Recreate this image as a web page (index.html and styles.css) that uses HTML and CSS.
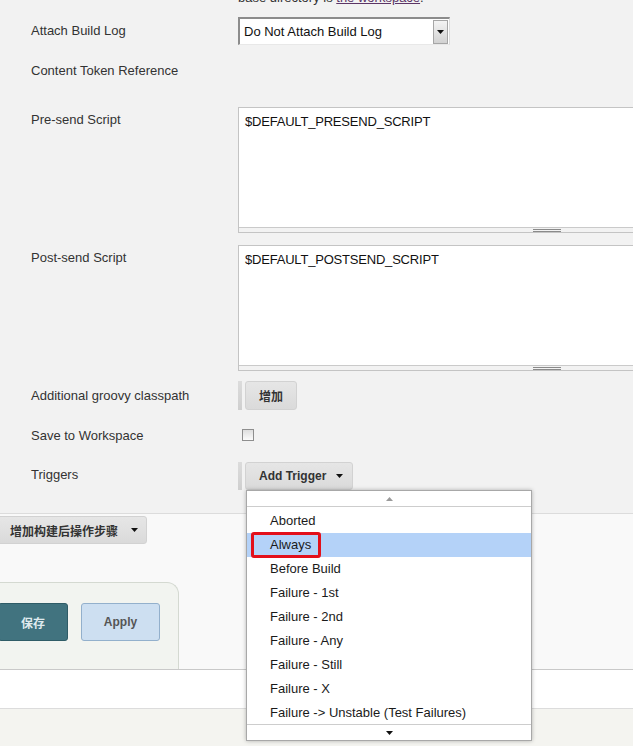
FILE: index.html
```html
<!DOCTYPE html>
<html lang="zh">
<head>
<meta charset="utf-8">
<title>Editable Email Notification</title>
<link rel="stylesheet" href="styles.css">
</head>
<body>
<div class="page">
  <div class="config">
    <div class="row row-help">
      <div class="label"></div>
      <div class="field help">base directory is <a href="#" class="visited">the workspace</a>.</div>
    </div>

    <div class="row row-attach">
      <div class="label">Attach Build Log</div>
      <div class="field">
        <div class="select">
          <span class="select-text">Do Not Attach Build Log</span>
          <span class="select-btn"><svg width="7" height="4" viewBox="0 0 7 4"><polygon points="0,0 7,0 3.5,4" fill="#111"/></svg></span>
        </div>
      </div>
    </div>

    <div class="row row-token">
      <div class="label">Content Token Reference</div>
    </div>

    <div class="row row-script row-pre">
      <div class="label">Pre-send Script</div>
      <div class="field">
        <div class="textarea">
          <div class="textarea-body">$DEFAULT_PRESEND_SCRIPT</div>
          <div class="textarea-handle"><span class="grip"></span></div>
        </div>
      </div>
    </div>

    <div class="row row-script row-post">
      <div class="label">Post-send Script</div>
      <div class="field">
        <div class="textarea">
          <div class="textarea-body">$DEFAULT_POSTSEND_SCRIPT</div>
          <div class="textarea-handle"><span class="grip"></span></div>
        </div>
      </div>
    </div>

    <div class="row row-groovy">
      <div class="label">Additional groovy classpath</div>
      <div class="field">
        <div class="btn-group">
          <button class="btn btn-add" type="button">增加</button>
        </div>
      </div>
    </div>

    <div class="row row-save">
      <div class="label">Save to Workspace</div>
      <div class="field">
        <input class="checkbox" type="checkbox">
      </div>
    </div>

    <div class="row row-triggers">
      <div class="label">Triggers</div>
      <div class="field">
        <div class="btn-group trigger-group">
          <button class="btn btn-trigger" type="button">Add Trigger<svg class="caret" width="7" height="4" viewBox="0 0 7 4"><polygon points="0,0 7,0 3.5,4" fill="#111"/></svg></button>
          <div class="menu">
            <div class="menu-scroll menu-scroll-top"><svg width="7" height="4" viewBox="0 0 7 4"><polygon points="0,4 7,4 3.5,0" fill="#9a9a9a"/></svg></div>
            <ul class="menu-list">
              <li class="menu-item">Aborted</li>
              <li class="menu-item is-active"><span class="annot">Always</span></li>
              <li class="menu-item">Before Build</li>
              <li class="menu-item">Failure - 1st</li>
              <li class="menu-item">Failure - 2nd</li>
              <li class="menu-item">Failure - Any</li>
              <li class="menu-item">Failure - Still</li>
              <li class="menu-item">Failure - X</li>
              <li class="menu-item">Failure -&gt; Unstable (Test Failures)</li>
            </ul>
            <div class="menu-scroll menu-scroll-bottom"><svg width="7" height="4" viewBox="0 0 7 4"><polygon points="0,0 7,0 3.5,4" fill="#111"/></svg></div>
          </div>
        </div>
      </div>
    </div>
  </div>

  <div class="post">
    <button class="btn btn-post" type="button">增加构建后操作步骤<svg class="caret" width="7" height="4" viewBox="0 0 7 4"><polygon points="0,0 7,0 3.5,4" fill="#111"/></svg></button>
    <div class="actions">
      <button class="btn-save" type="button">保存</button>
      <button class="btn-apply" type="button">Apply</button>
    </div>
  </div>

  <div class="footer-band"></div>
  <div class="footer"></div>
</div>
</body>
</html>
```

FILE: styles.css
```css
html, body {
  margin: 0;
  padding: 0;
}

body {
  width: 633px;
  height: 746px;
  overflow: hidden;
  background: #f4f4f0;
  font-family: "Liberation Sans", Arial, "Noto Sans CJK SC", sans-serif;
  font-size: 13px;
  color: #333;
}

.page {
  width: 633px;
  overflow: hidden;
}

/* ---------- config area ---------- */
.config {
  background: #f2f2f2;
  padding: 0 0 23px 31px;
}

.row {
  display: flex;
  align-items: center;
}

.label {
  width: 207px;
  flex: none;
  line-height: 16px;
}

.field {
  flex: none;
}

.row-help {
  margin-top: -10px;
  height: 16px;
  line-height: 16px;
}

.help a.visited {
  color: #5c3566;
  text-decoration: underline;
}

.row-attach {
  margin-top: 11px;
}

.row-token {
  margin-top: 18px;
}

.row-script {
  align-items: flex-start;
}

.row-script .label {
  padding-top: 5px;
}

.row-pre {
  margin-top: 28px;
}

.row-post {
  margin-top: 12px;
}

.row-groovy {
  margin-top: 10px;
}

.row-save {
  margin-top: 18px;
  height: 16px;
}

.row-triggers {
  margin-top: 18px;
}

.row-triggers .label {
  margin-top: -2px;
}

/* select */
.select {
  box-sizing: border-box;
  width: 212px;
  height: 28px;
  display: flex;
  align-items: center;
  background: #fff;
  border-style: solid;
  border-width: 2px 1px 1px 2px;
  border-color: #8c8c8c #dcdcdc #e8e8e8 #8c8c8c;
}

.select-text {
  flex: 1;
  padding-left: 4px;
  line-height: 16px;
  color: #111;
}

.select-btn {
  box-sizing: border-box;
  width: 15px;
  height: 24px;
  margin-right: 1px;
  display: flex;
  align-items: center;
  justify-content: center;
  background: linear-gradient(#f4f4f4, #d2d2d2);
  border: 1px solid #a6a6a6;
}

/* textarea */
.textarea {
  box-sizing: border-box;
  width: 618px;
  height: 126px;
  display: flex;
  flex-direction: column;
  background: #fff;
  border: 1px solid #c4c4c4;
}

.textarea-body {
  flex: 1;
  padding: 6px 6px;
  line-height: 16px;
  color: #111;
  letter-spacing: -0.2px;
}

.textarea-handle {
  height: 4px;
  background: #f2f2f2;
  border-top: 1px solid #cacaca;
  display: flex;
  justify-content: center;
  align-items: center;
}

.grip {
  width: 28px;
  height: 1px;
  border-top: 1px solid #8a8a8a;
  border-bottom: 1px solid #8a8a8a;
}

/* buttons */
.btn-group {
  display: flex;
  align-items: stretch;
}

.btn-group::before {
  content: "";
  width: 4px;
  margin-right: 3px;
  background: linear-gradient(#dcdcdc, #cfcfcf);
}

.trigger-group {
  position: relative;
}

.btn {
  box-sizing: border-box;
  display: inline-flex;
  align-items: center;
  font-family: "Liberation Sans", Arial, "Noto Sans CJK SC", sans-serif;
  font-size: 12px;
  font-weight: bold;
  color: #333;
  background: linear-gradient(#e6e6e6, #dadada);
  border: 1px solid #d2d2d2;
  border-radius: 3px;
  margin: 0;
}

.btn-add {
  height: 29px;
  padding: 0 13px;
}

.btn-trigger {
  height: 28px;
  padding: 0 9px 0 13px;
}

.caret {
  margin-left: 10px;
}

/* checkbox */
.checkbox {
  appearance: none;
  -webkit-appearance: none;
  box-sizing: border-box;
  width: 12px;
  height: 12px;
  margin: 0 0 0 4px;
  border: 1px solid #8e8e8e;
  background: linear-gradient(#dedede, #fbfbfb);
}

/* dropdown menu */
.menu {
  position: absolute;
  top: 28px;
  left: 8px;
  width: 286px;
  box-sizing: border-box;
  background: #fff;
  border: 1px solid #a8a8a8;
  box-shadow: 0 0 4px rgba(0, 0, 0, 0.28);
  z-index: 10;
}

.menu-scroll {
  height: 15px;
  display: flex;
  align-items: center;
  justify-content: center;
}

.menu-scroll-top {
  border-bottom: 1px solid #cdcdcd;
}

.menu-scroll-bottom {
  border-top: 1px solid #cdcdcd;
}

.menu-list {
  list-style: none;
  margin: 0;
  padding: 2px 0 0 0;
  height: 215px;
  overflow: hidden;
}

.menu-item {
  height: 24px;
  line-height: 24px;
  padding-left: 23px;
  color: #1a1a1a;
  white-space: nowrap;
}

.menu-item.is-active {
  background: #b4d2f8;
}

.annot {
  position: relative;
  display: inline-block;
}

.annot::before {
  content: "";
  position: absolute;
  top: -1px;
  bottom: -1px;
  left: -19px;
  right: -10px;
  box-sizing: border-box;
  border: 3px solid #e3101a;
  border-radius: 3px;
}

/* post-build section */
.post {
  border-top: 1px solid #dcdcdc;
  background: #f9f9f9;
  padding-top: 2px;
}

.btn-post {
  height: 28px;
  margin-left: -5px;
  padding: 0 8px 0 14px;
}

.btn-post .caret {
  margin-left: 13px;
}

.actions {
  box-sizing: border-box;
  width: 200px;
  height: 87px;
  margin: 38px 0 0 -21px;
  padding: 20px 0 0 19px;
  display: flex;
  gap: 13px;
  background: #f2f4f0;
  border-top: 1px solid #d4d9d1;
  border-right: 1px solid #d4d9d1;
  border-top-right-radius: 12px;
}

.btn-save,
.btn-apply {
  box-sizing: border-box;
  height: 38px;
  margin: 0;
  font-family: "Liberation Sans", Arial, "Noto Sans CJK SC", sans-serif;
  font-size: 12px;
  font-weight: bold;
  border-radius: 3px;
}

.btn-save {
  width: 70px;
  background: #41737f;
  border: 1px solid #2f5c67;
  color: #dfeaee;
}

.btn-apply {
  width: 79px;
  background: #cddff1;
  border: 1px solid #93b0cc;
  color: #555;
}

.footer-band {
  height: 38px;
  background: #fff;
  border-top: 1px solid #c9c9c9;
  border-bottom: 1px solid #dcdcdc;
}

.footer {
  height: 40px;
  background: #f4f4f0;
}
```
